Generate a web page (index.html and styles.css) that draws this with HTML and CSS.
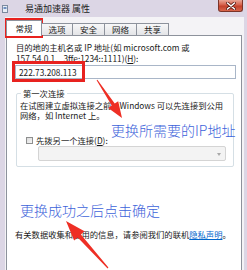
FILE: index.html
```html
<!DOCTYPE html>
<html lang="zh-CN">
<head>
    <meta charset="UTF-8">
    <title>易通加速器 属性</title>
    <link rel="stylesheet" href="styles.css">
</head>
<body>
    <div class="window">
        <div class="titlebar">
            <svg class="app-icon" width="6" height="8" viewBox="0 0 6 8">
                <rect x="0.5" y="0.5" width="5" height="7" fill="#e8eef6" stroke="#7c8aa0"/>
                <rect x="1.5" y="2" width="3" height="2" fill="#6f8fc0"/>
            </svg>
            <span class="title">易通加速器 属性</span>
            <span class="close">
                <svg width="10" height="8" viewBox="0 0 10 8">
                    <path d="M1.5 1 L8.5 7 M8.5 1 L1.5 7" stroke="#5a1a12" stroke-width="3" stroke-linecap="round"/>
                    <path d="M1.5 1 L8.5 7 M8.5 1 L1.5 7" stroke="#fff" stroke-width="1.6" stroke-linecap="round"/>
                </svg>
            </span>
        </div>

        <div class="client">
            <div class="tabs">
                <div class="tab active">常规</div>
                <div class="tab">选项</div>
                <div class="tab">安全</div>
                <div class="tab">网络</div>
                <div class="tab">共享</div>
            </div>
            <div class="panel">
                <p class="label">目的地的主机名或 IP 地址(如 microsoft.com 或<br>157.54.0.1、3ffe:1234::1111)(<u>H</u>):</p>
                <div class="textbox">222.73.208.113</div>

                <div class="group">
                    <span class="legend">第一次连接</span>
                    <p class="group-text">在试图建立虚拟连接之前，Windows 可以先连接到公用<br>网络，如 Internet 上。</p>
                    <div class="check-row">
                        <span class="checkbox"></span>
                        <span class="check-label">先拨另一个连接(<u>D</u>):</span>
                    </div>
                    <div class="select"><span class="caret"></span></div>
                </div>

                <p class="note">有关数据收集和使用的信息，请参阅我们的联机<a href="#">隐私声明</a>。</p>
            </div>
        </div>

        <!-- annotations drawn over the dialog -->
        <div class="mark mark-tab"></div>
        <div class="mark mark-ip"></div>
        <div class="hint hint-ip">更换所需要的IP地址</div>
        <div class="hint hint-ok">更换成功之后点击确定</div>
        <svg class="arrows" width="247" height="270" viewBox="0 0 247 270">
            <polygon points="96.6,80.3 111.7,105.6 108.2,107.9 122,118 118.2,101.3 114.7,103.6 97.4,79.7" fill="#ee2f25"/>
            <polygon points="108.4,267.6 80.9,234.4 84.5,231.2 66,221 74.1,240.6 77.7,237.4 107.6,268.4" fill="#ee2f25"/>
        </svg>
    </div>
</body>
</html>
```

FILE: styles.css
```css
body {
    margin: 0;
    background-color: #dcd6e5;
    font-family: 'Noto Sans CJK SC', sans-serif;
    color: #1a1a1a;
    overflow: hidden;
}
.window {
    position: relative;
    width: 247px;
    height: 270px;
    overflow: hidden;
}
.titlebar {
    height: 17px;
    display: flex;
    align-items: center;
    padding-left: 2px;
}
.app-icon {
    display: block;
}
.title {
    margin-left: 17px;
    font-size: 9px;
    color: #222;
}
.close {
    align-self: flex-start;
    margin-left: auto;
    margin-right: 4px;
    width: 25px;
    height: 12px;
    display: flex;
    align-items: center;
    justify-content: center;
    background: linear-gradient(#e8a595, #d6604a 45%, #c2412b 55%, #d9654b);
    border: 1px solid #7b3429;
    border-top: none;
    border-radius: 0 0 3px 3px;
    box-sizing: border-box;
}
.client {
    margin: 0 3px 0 5px;
    height: 253px;
    background: #f4f3f6;
    padding-top: 3px;
    box-sizing: border-box;
}
.tabs {
    display: flex;
    align-items: flex-end;
    height: 15px;
    padding-left: 3px;
    position: relative;
    z-index: 1;
}
.tab {
    width: 32px;
    height: 12px;
    box-sizing: border-box;
    border: 1px solid #8d929c;
    border-bottom: none;
    border-left: none;
    background: linear-gradient(#f7f7f8, #e3e4e7);
    font-size: 8.5px;
    line-height: 11px;
    text-align: center;
    color: #222;
}
.tab:nth-child(2) {
    border-left: 1px solid #8d929c;
}
.tab.active {
    width: 36px;
    height: 16px;
    margin: 0 -1px -1px -2px;
    border-left: 1px solid #8d929c;
    background: #fff;
    line-height: 15px;
}
.panel {
    margin: 0 0 0 1px;
    width: 236px;
    height: 240px;
    box-sizing: border-box;
    background: #fff;
    border: 1px solid #8d929c;
    padding: 6px 5px 0 9px;
}
.label {
    margin: 0;
    font-size: 8.3px;
    line-height: 10.5px;
}
.textbox {
    margin: 2px 0 0 -1px;
    width: 221px;
    height: 14px;
    box-sizing: border-box;
    border: 1px solid #a9b6c8;
    padding-left: 3px;
    font-size: 8.3px;
    line-height: 12px;
}
.group {
    position: relative;
    margin: 14px 0 0 0;
    width: 218px;
    height: 74px;
    box-sizing: border-box;
    border: 1px solid #d5dfe5;
    border-radius: 2px;
    padding: 5.5px 3px 0 3px;
}
.legend {
    position: absolute;
    top: -6px;
    left: 4px;
    padding: 0 2px;
    background: #fff;
    font-size: 8.3px;
    line-height: 10px;
}
.group-text {
    margin: 0;
    font-size: 8.3px;
    line-height: 10.5px;
}
.check-row {
    display: flex;
    align-items: center;
    margin: 14.5px 0 0 6px;
    height: 10px;
}
.checkbox {
    width: 7px;
    height: 7px;
    box-sizing: border-box;
    border: 1px solid #8e8f8f;
    background: linear-gradient(135deg, #dcdcdc, #f6f6f6);
}
.check-label {
    margin-left: 3px;
    font-size: 8.3px;
}
.select {
    position: relative;
    margin: 1px 0 0 18px;
    width: 188px;
    height: 15px;
    box-sizing: border-box;
    border: 1px solid #d4d4d4;
    border-radius: 2px;
    background: #f3f3f3;
}
.caret {
    position: absolute;
    right: 4px;
    top: 6px;
    border-left: 2.5px solid transparent;
    border-right: 2.5px solid transparent;
    border-top: 3px solid #a8a8a8;
}
.note {
    margin: 62px 0 0 -1px;
    font-size: 8.3px;
    line-height: 10px;
    white-space: nowrap;
}
.note a {
    color: #0066cc;
    text-decoration: underline;
}
.mark {
    position: absolute;
    border: 3px solid #e8221f;
    box-sizing: border-box;
}
.mark-tab {
    left: 5px;
    top: 18px;
    width: 38px;
    height: 20px;
}
.mark-ip {
    left: 12px;
    top: 61px;
    width: 73px;
    height: 21px;
}
.hint {
    position: absolute;
    font-size: 14px;
    line-height: 16px;
    color: #3d63da;
    white-space: nowrap;
    font-weight: 300;
}
.hint-ip {
    left: 111px;
    top: 122px;
}
.hint-ok {
    left: 20px;
    top: 202px;
}
.arrows {
    position: absolute;
    left: 0;
    top: 0;
    pointer-events: none;
}
```
